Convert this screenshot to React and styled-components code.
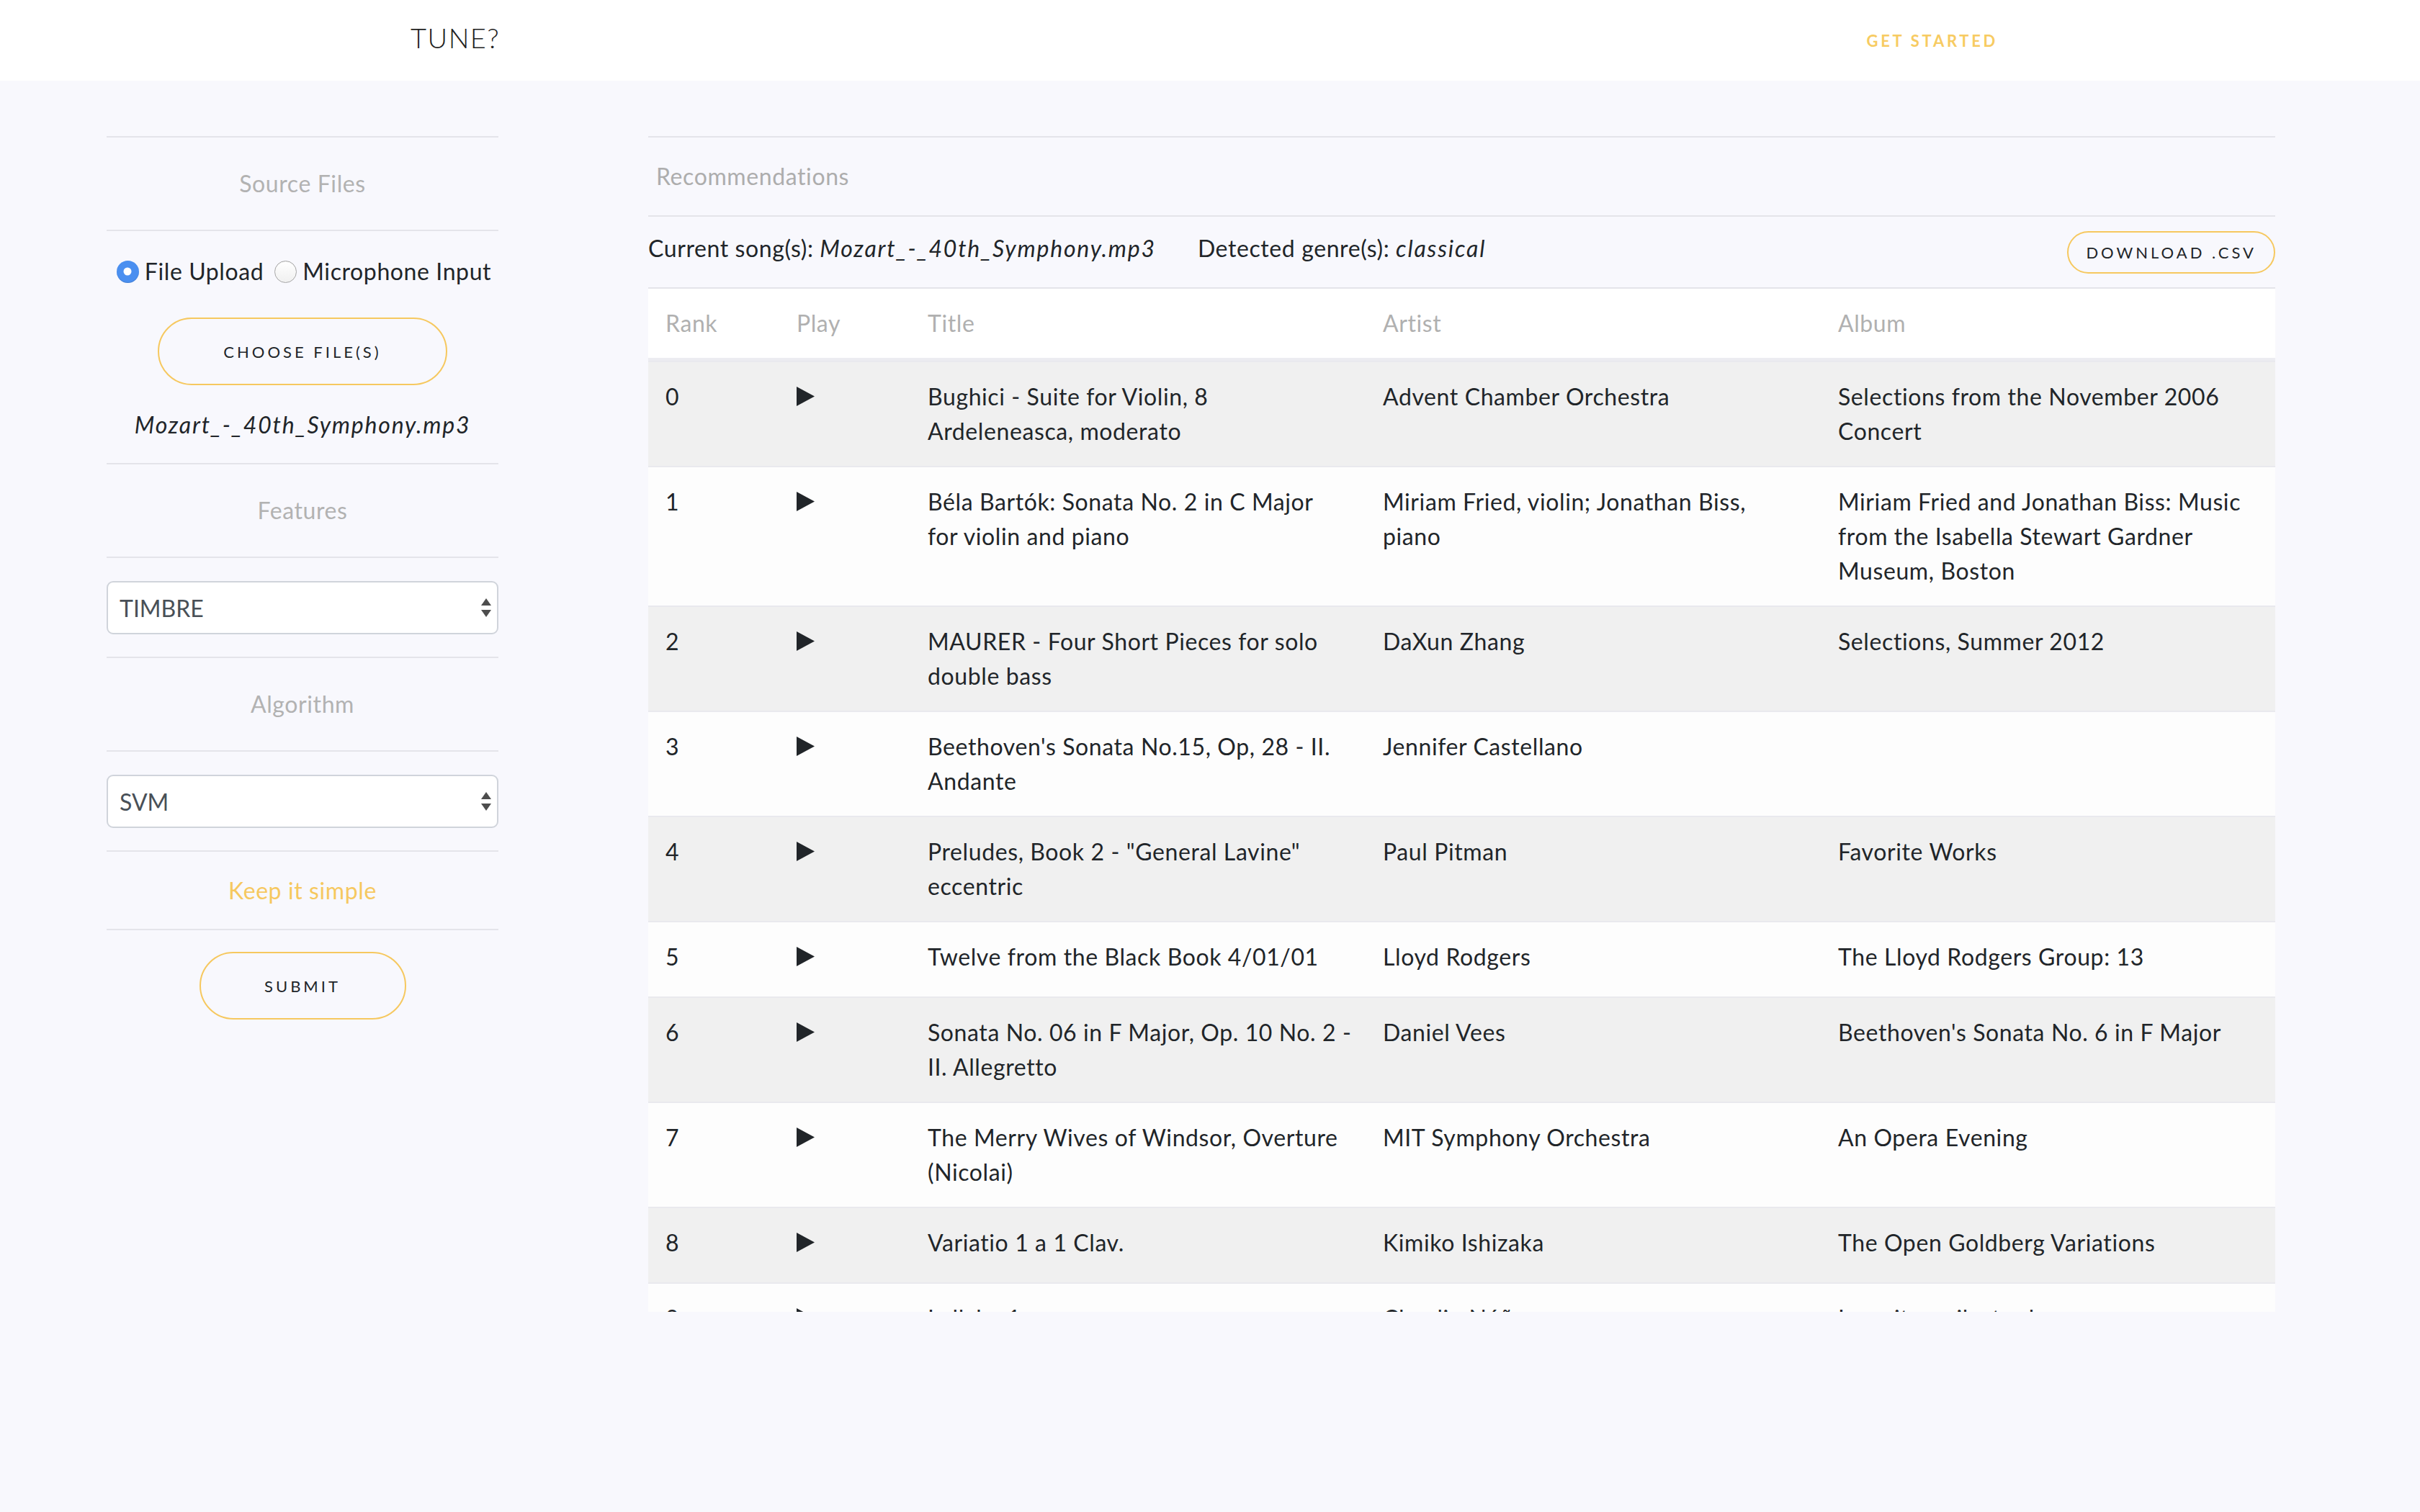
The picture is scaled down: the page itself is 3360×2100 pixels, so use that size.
import React from 'react';
import styled, { createGlobalStyle } from 'styled-components';

const GlobalStyle = createGlobalStyle`
  html, body { margin: 0; padding: 0; }
  body {
    background: #f8f8fd;
    font-family: 'Lato', 'Noto Sans', sans-serif;
    color: #212529;
    font-size: 32px;
    line-height: 1.5;
    letter-spacing: 0.6px;
  }
  em { letter-spacing: 1.8px; }
  * { box-sizing: border-box; }
`;

const Page = styled.div`
  min-height: 2100px;
  background: #f8f8fd;
`;

const Header = styled.header`
  height: 112px;
  background: #ffffff;
  display: flex;
  align-items: center;
  justify-content: space-between;
  padding: 0 586px 0 570px;
`;

const Brand = styled.div`
  font-family: 'Lato', sans-serif;
  font-weight: 300;
  font-size: 38px;
  letter-spacing: 1.5px;
  color: #222;
  line-height: 1;
  margin-bottom: 8px;
`;

const NavLink = styled.a`
  font-size: 22px;
  font-weight: 700;
  letter-spacing: 3.7px;
  color: #f7cb62;
  text-decoration: none;
  line-height: 1;
  margin-top: 2px;
`;

const Main = styled.main`
  display: flex;
  align-items: flex-start;
  gap: 208px;
  padding: 77px 0 0 148px;
`;

const Sidebar = styled.aside`
  width: 544px;
  flex: none;
  display: flex;
  flex-direction: column;
`;

const Divider = styled.hr`
  margin: 0;
  border: 0;
  height: 2px;
  background: #e4e4ea;
`;

const SideTitle = styled.div`
  height: ${(p) => (p.$compact ? '107px' : '128px')};
  display: flex;
  align-items: center;
  justify-content: center;
  color: ${(p) => (p.$accent ? '#f6c85f' : '#b2b2b2')};
  font-size: 32px;
`;

const SourceBody = styled.div`
  display: flex;
  flex-direction: column;
  align-items: center;
  padding: 32px 0 29px;
`;

const RadioRow = styled.div`
  display: flex;
  align-items: center;
  gap: 15px;
  height: 48px;
  margin-left: 4px;
`;

const RadioLabel = styled.label`
  display: flex;
  align-items: center;
  gap: 8px;
  color: #212529;
  font-size: 32px;
`;

const RadioDot = styled.span`
  width: 31px;
  height: 31px;
  border-radius: 50%;
  flex: none;
  position: relative;
  background: ${(p) => (p.$checked ? '#4a8ff0' : 'linear-gradient(#ffffff, #f0f0f0)')};
  border: ${(p) => (p.$checked ? '0' : '1.5px solid #a6a6a6')};
  box-shadow: ${(p) => (p.$checked ? 'inset 0 -1px 1px rgba(0,0,0,0.12)' : 'inset 0 1px 1px rgba(0,0,0,0.06)')};

  &::after {
    content: '';
    display: ${(p) => (p.$checked ? 'block' : 'none')};
    position: absolute;
    left: 50%;
    top: 50%;
    width: 11px;
    height: 11px;
    border-radius: 50%;
    background: #fff;
    transform: translate(-50%, -50%);
  }
`;

const PillButton = styled.button`
  width: ${(p) => p.$width};
  height: ${(p) => p.$height || '94px'};
  padding: 0 ${(p) => p.$padX || '0'};
  border: 2px solid #f6c85f;
  border-radius: 60px;
  background: transparent;
  font-family: 'Lato', sans-serif;
  font-size: 22px;
  font-weight: 400;
  letter-spacing: 4px;
  text-transform: uppercase;
  color: #212529;
  cursor: pointer;
  flex: none;
`;

const ChooseWrap = styled.div`
  margin-top: 40px;
`;

const FileName = styled.em`
  display: block;
  margin-top: 31px;
  font-size: 32px;
  line-height: 48px;
  color: #212529;
`;

const SelectBlock = styled.div`
  padding: 32px 0 31px;
`;

const SelectBox = styled.div`
  position: relative;
  height: 74px;
`;

const NativeSelect = styled.select`
  appearance: none;
  -webkit-appearance: none;
  width: 100%;
  height: 100%;
  border: 2px solid #d0d4db;
  border-radius: 9px;
  background: #fff;
  padding: 0 40px 0 16px;
  font-family: 'Lato', sans-serif;
  font-size: 32px;
  color: #495057;
  outline: none;
`;

const SelectArrows = styled.svg`
  position: absolute;
  right: 9px;
  top: 50%;
  transform: translateY(-50%);
  pointer-events: none;
`;

const SubmitWrap = styled.div`
  display: flex;
  justify-content: center;
  padding-top: 30px;
`;

const Content = styled.section`
  width: 2259px;
  flex: none;
`;

const RecHeader = styled.div`
  height: 108px;
  display: flex;
  align-items: center;
  padding: 0 0 0 11px;
  color: #adadad;
  font-size: 32px;
`;

const InfoRow = styled.div`
  height: 98px;
  display: flex;
  align-items: center;
  justify-content: space-between;
`;

const InfoText = styled.div`
  display: flex;
  gap: 58px;
  margin-bottom: 10px;
  font-size: 32px;
`;

const TableWrap = styled.div`
  height: 1423px;
  overflow: hidden;
  border-top: 2px solid #e4e4ea;
`;

const Table = styled.table`
  width: 100%;
  border-collapse: separate;
  border-spacing: 0;
  table-layout: fixed;
`;

const Th = styled.th`
  width: ${(p) => p.$w || 'auto'};
  text-align: left;
  font-weight: 400;
  color: #b0b0b0;
  background: #ffffff;
  padding: 24px;
  line-height: 48px;
  border-bottom: 4px solid #ececf1;
`;

const Tr = styled.tr`
  background: ${(p) => (p.$striped ? '#f0f0f0' : '#fdfdfd')};
`;

const Td = styled.td`
  padding: 24px;
  vertical-align: top;
  line-height: 48px;
  border-top: 2px solid #e9e9ee;
  white-space: pre;
  color: #212529;
`;

const PlayButton = styled.button`
  display: flex;
  align-items: flex-start;
  height: 55px;
  padding: 10px 0 0;
  margin: 0;
  border: 0;
  background: none;
  cursor: pointer;
`;

const rows = [
  ['Bughici - Suite for Violin, 8\nArdeleneasca, moderato', 'Advent Chamber Orchestra', 'Selections from the November 2006\nConcert'],
  ['Béla Bartók: Sonata No. 2 in C Major\nfor violin and piano', 'Miriam Fried, violin; Jonathan Biss,\npiano', 'Miriam Fried and Jonathan Biss: Music\nfrom the Isabella Stewart Gardner\nMuseum, Boston'],
  ['MAURER - Four Short Pieces for solo\ndouble bass', 'DaXun Zhang', 'Selections, Summer 2012'],
  ["Beethoven's Sonata No.15, Op, 28 - II.\nAndante", 'Jennifer Castellano', ''],
  ['Preludes, Book 2 - "General Lavine"\neccentric', 'Paul Pitman', 'Favorite Works'],
  ['Twelve from the Black Book 4/01/01', 'Lloyd Rodgers', 'The Lloyd Rodgers Group: 13'],
  ['Sonata No. 06 in F Major, Op. 10 No. 2 -\nII. Allegretto', 'Daniel Vees', "Beethoven's Sonata No. 6 in F Major"],
  ['The Merry Wives of Windsor, Overture\n(Nicolai)', 'MIT Symphony Orchestra', 'An Opera Evening'],
  ['Variatio 1 a 1 Clav.', 'Kimiko Ishizaka', 'The Open Goldberg Variations'],
  ['Lullaby 1', 'Claudio Núñez', 'La guitarra ilustrada'],
];

const Arrows = () => (
  <SelectArrows width="16" height="28" viewBox="0 0 16 28">
    <polygon points="1,11 8,1 15,11" fill="#4d4d4d" />
    <polygon points="1,17 15,17 8,27" fill="#4d4d4d" />
  </SelectArrows>
);

const PlayIcon = () => (
  <svg width="25" height="27" viewBox="0 0 25 27">
    <polygon points="0,0 25,13.5 0,27" fill="#212529" />
  </svg>
);

export default function App() {
  return (
    <Page>
      <GlobalStyle />
      <Header>
        <Brand>TUNE?</Brand>
        <NavLink href="#">GET STARTED</NavLink>
      </Header>
      <Main>
        <Sidebar>
          <Divider />
          <SideTitle>Source Files</SideTitle>
          <Divider />
          <SourceBody>
            <RadioRow>
              <RadioLabel>
                <RadioDot $checked />
                File Upload
              </RadioLabel>
              <RadioLabel>
                <RadioDot />
                Microphone Input
              </RadioLabel>
            </RadioRow>
            <ChooseWrap>
              <PillButton $width="402px">Choose File(s)</PillButton>
            </ChooseWrap>
            <FileName>Mozart_-_40th_Symphony.mp3</FileName>
          </SourceBody>
          <Divider />
          <SideTitle>Features</SideTitle>
          <Divider />
          <SelectBlock>
            <SelectBox>
              <NativeSelect defaultValue="timbre">
                <option value="timbre">TIMBRE</option>
              </NativeSelect>
              <Arrows />
            </SelectBox>
          </SelectBlock>
          <Divider />
          <SideTitle>Algorithm</SideTitle>
          <Divider />
          <SelectBlock>
            <SelectBox>
              <NativeSelect defaultValue="svm">
                <option value="svm">SVM</option>
              </NativeSelect>
              <Arrows />
            </SelectBox>
          </SelectBlock>
          <Divider />
          <SideTitle $compact $accent>Keep it simple</SideTitle>
          <Divider />
          <SubmitWrap>
            <PillButton $width="287px">Submit</PillButton>
          </SubmitWrap>
        </Sidebar>
        <Content>
          <Divider />
          <RecHeader>Recommendations</RecHeader>
          <Divider />
          <InfoRow>
            <InfoText>
              <span>
                Current song(s): <em>Mozart_-_40th_Symphony.mp3</em>
              </span>
              <span>
                Detected genre(s): <em>classical</em>
              </span>
            </InfoText>
            <PillButton $height="59px" $padX="24px">Download .csv</PillButton>
          </InfoRow>
          <TableWrap>
            <Table>
              <thead>
                <tr>
                  <Th $w="182px">Rank</Th>
                  <Th $w="182px">Play</Th>
                  <Th $w="632px">Title</Th>
                  <Th $w="632px">Artist</Th>
                  <Th>Album</Th>
                </tr>
              </thead>
              <tbody>
                {rows.map((r, i) => (
                  <Tr key={i} $striped={i % 2 === 0}>
                    <Td>{i}</Td>
                    <Td>
                      <PlayButton aria-label="Play">
                        <PlayIcon />
                      </PlayButton>
                    </Td>
                    <Td>{r[0]}</Td>
                    <Td>{r[1]}</Td>
                    <Td>{r[2]}</Td>
                  </Tr>
                ))}
              </tbody>
            </Table>
          </TableWrap>
        </Content>
      </Main>
    </Page>
  );
}
